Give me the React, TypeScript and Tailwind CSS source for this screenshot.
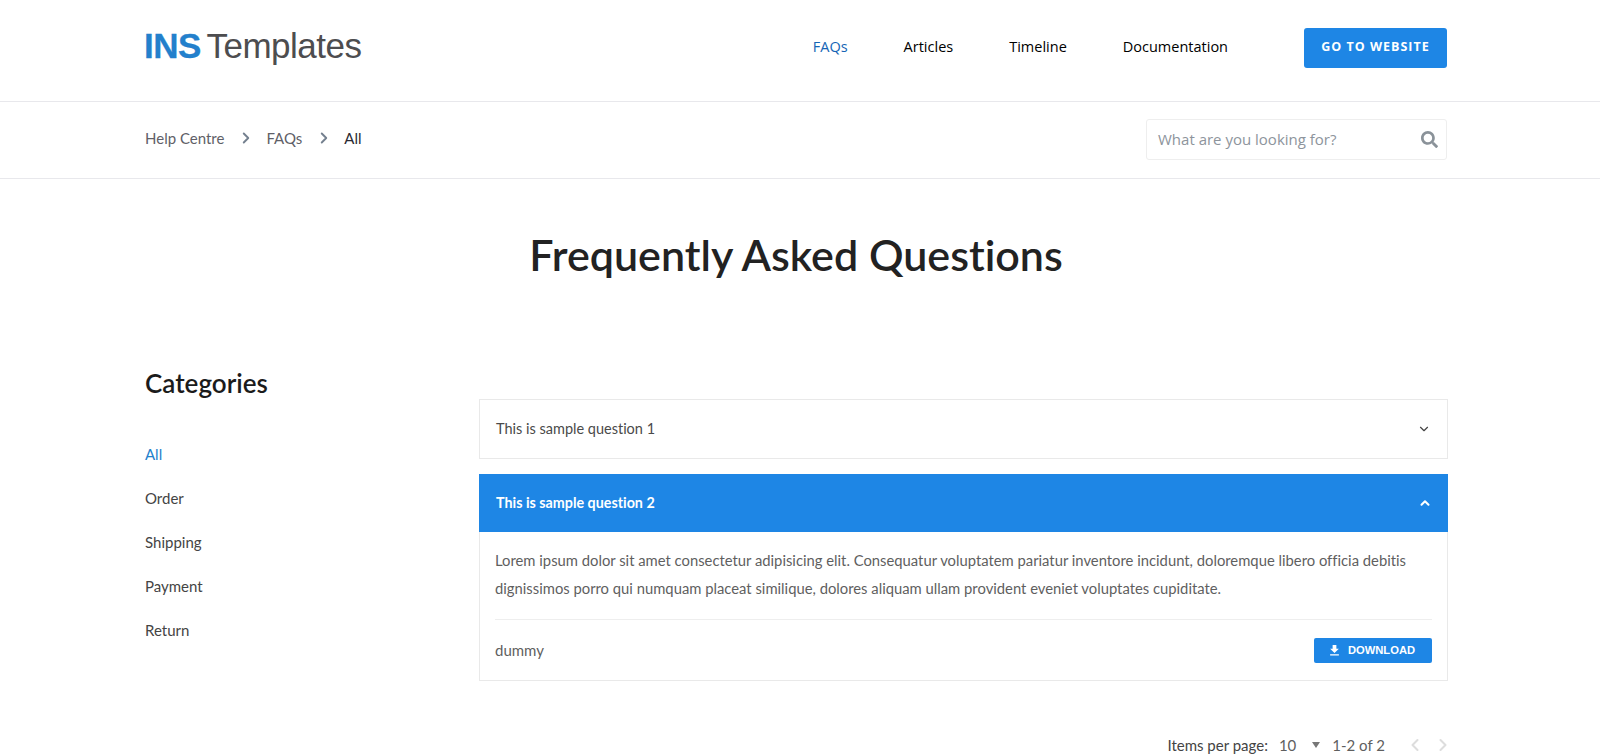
import { ChevronDown, ChevronLeft, ChevronRight, ChevronUp } from "lucide-react";
import { FaSearch } from "react-icons/fa";
import { MdFileDownload } from "react-icons/md";

const navLinks = ["FAQs", "Articles", "Timeline", "Documentation"];
const categories = ["All", "Order", "Shipping", "Payment", "Return"];

function Header() {
  return (
    <header className="h-[102px] border-b border-[#e8e8ec]">
      <div className="mr-[153px] ml-[144px] flex h-full items-center justify-between pb-[6px]">
        <div className="-mt-[4px] font-['Liberation_Sans',sans-serif] text-[35px] leading-none tracking-[-0.5px] [word-spacing:-3px] text-[#4d4d4f]">
          <span className="font-bold text-[#2380cc] [-webkit-text-stroke:0.3px_#2380cc]">INS</span> Templates
        </div>
        <div className="flex items-center">
          <nav className="-mt-[2px] flex gap-[56px] font-['Open_Sans',sans-serif] text-[14.5px] text-black">
            {navLinks.map((link, i) => (
              <a key={link} className={i === 0 ? "text-[#1565b5]" : ""}>
                {link}
              </a>
            ))}
          </nav>
          <button className="ml-[76px] h-10 w-[143px] rounded-[3px] bg-[#1e86e5] font-['Open_Sans',sans-serif] text-[12.5px] font-bold tracking-[1px] text-white">
            GO TO WEBSITE
          </button>
        </div>
      </div>
    </header>
  );
}

function Breadcrumbs() {
  return (
    <div className="h-[77px] border-b border-[#e8e8ec]">
      <div className="mr-[153px] ml-[145px] flex h-full items-center justify-between">
        <div className="-mt-[4px] flex items-center text-[15px] text-[#5f5f68]">
          <span>Help Centre</span>
          <ChevronRight className="mr-[11px] ml-[13px] size-[18px] text-[#74808f]" strokeWidth={2.5} />
          <span>FAQs</span>
          <ChevronRight className="mr-[11px] ml-[13px] size-[18px] text-[#74808f]" strokeWidth={2.5} />
          <span className="text-[#2a2a33]">All</span>
        </div>
        <div className="-mt-[2px] flex h-[41px] w-[301px] items-center justify-between rounded-[3px] border border-[#eeeeee] pr-2 pl-[11px]">
          <span className="font-['Open_Sans',sans-serif] text-[15px] text-[#8d949c]">What are you looking for?</span>
          <FaSearch className="size-[17px] text-[#8a9299]" />
        </div>
      </div>
    </div>
  );
}

function Sidebar() {
  return (
    <aside className="w-[334px] shrink-0">
      <h2 className="text-[26px] leading-[30px] font-semibold text-[#1b1b1b]">Categories</h2>
      <ul className="mt-[34px] text-[15px] text-[#444444]">
        {categories.map((category, i) => (
          <li key={category} className={`h-[44px] leading-[44px] ${i === 0 ? "text-[#2380cc]" : ""}`}>
            {category}
          </li>
        ))}
      </ul>
    </aside>
  );
}

function Questions() {
  return (
    <div className="mt-[31px] flex-1">
      <div className="flex h-[60px] items-center justify-between border border-[#e9e9e9] px-[16px] text-[14.5px] text-[#4a4a4a]">
        <span>This is sample question 1</span>
        <ChevronDown className="size-[14px] text-[#444444]" strokeWidth={2} />
      </div>
      <div className="mt-[15px] flex h-[58px] items-center justify-between bg-[#1e86e5] pr-[16px] pl-[17px] text-[14.3px] font-bold text-white">
        <span>This is sample question 2</span>
        <ChevronUp className="size-[14px]" strokeWidth={3.5} />
      </div>
      <div className="h-[149px] border-x border-b border-[#e9e9e9] px-[15px] pt-[15px]">
        <p className="text-[14.8px] leading-[27.5px] text-[#5f5f5f]">
          Lorem ipsum dolor sit amet consectetur adipisicing elit. Consequatur voluptatem pariatur inventore incidunt, doloremque libero officia debitis dignissimos porro qui numquam placeat similique, dolores aliquam ullam provident eveniet voluptates cupiditate.
        </p>
        <div className="mt-[17px] flex items-center justify-between border-t border-[#eeeeee] pt-[18px]">
          <span className="text-[15px] text-[#5f5f5f]">dummy</span>
          <button className="flex h-[25px] w-[118px] items-center justify-center gap-[6px] rounded-[2px] bg-[#1e86e5] pr-[4px] font-['Liberation_Sans',sans-serif] text-[11.2px] font-bold text-white">
            <MdFileDownload className="size-[15px]" />
            DOWNLOAD
          </button>
        </div>
      </div>
      <div className="mt-[53px] -mr-[5px] flex items-center justify-end text-[15px]">
        <span className="text-[#444444]">Items per page:</span>
        <span className="ml-[11px] text-[#5f5f5f]">10</span>
        <span className="mr-[12px] ml-[16px] h-0 w-0 border-x-[4px] border-t-[6px] border-x-transparent border-t-[#777777]" />
        <span className="text-[#5f5f5f]">1-2 of 2</span>
        <ChevronLeft className="ml-[20px] size-5 text-[#dddddd]" strokeWidth={2.5} />
        <ChevronRight className="ml-[8px] size-5 text-[#dddddd]" strokeWidth={2.5} />
      </div>
    </div>
  );
}

export default function App() {
  return (
    <div className="h-[756px] overflow-hidden bg-white font-['Lato',sans-serif] [font-variant-ligatures:none]">
      <Header />
      <Breadcrumbs />
      <main>
        <h1 className="mt-[48px] mr-[8px] text-center text-[43px] leading-[56px] font-semibold text-[#222222]">
          Frequently Asked Questions
        </h1>
        <div className="mt-[85px] mr-[152px] ml-[145px] flex">
          <Sidebar />
          <Questions />
        </div>
      </main>
    </div>
  );
}
